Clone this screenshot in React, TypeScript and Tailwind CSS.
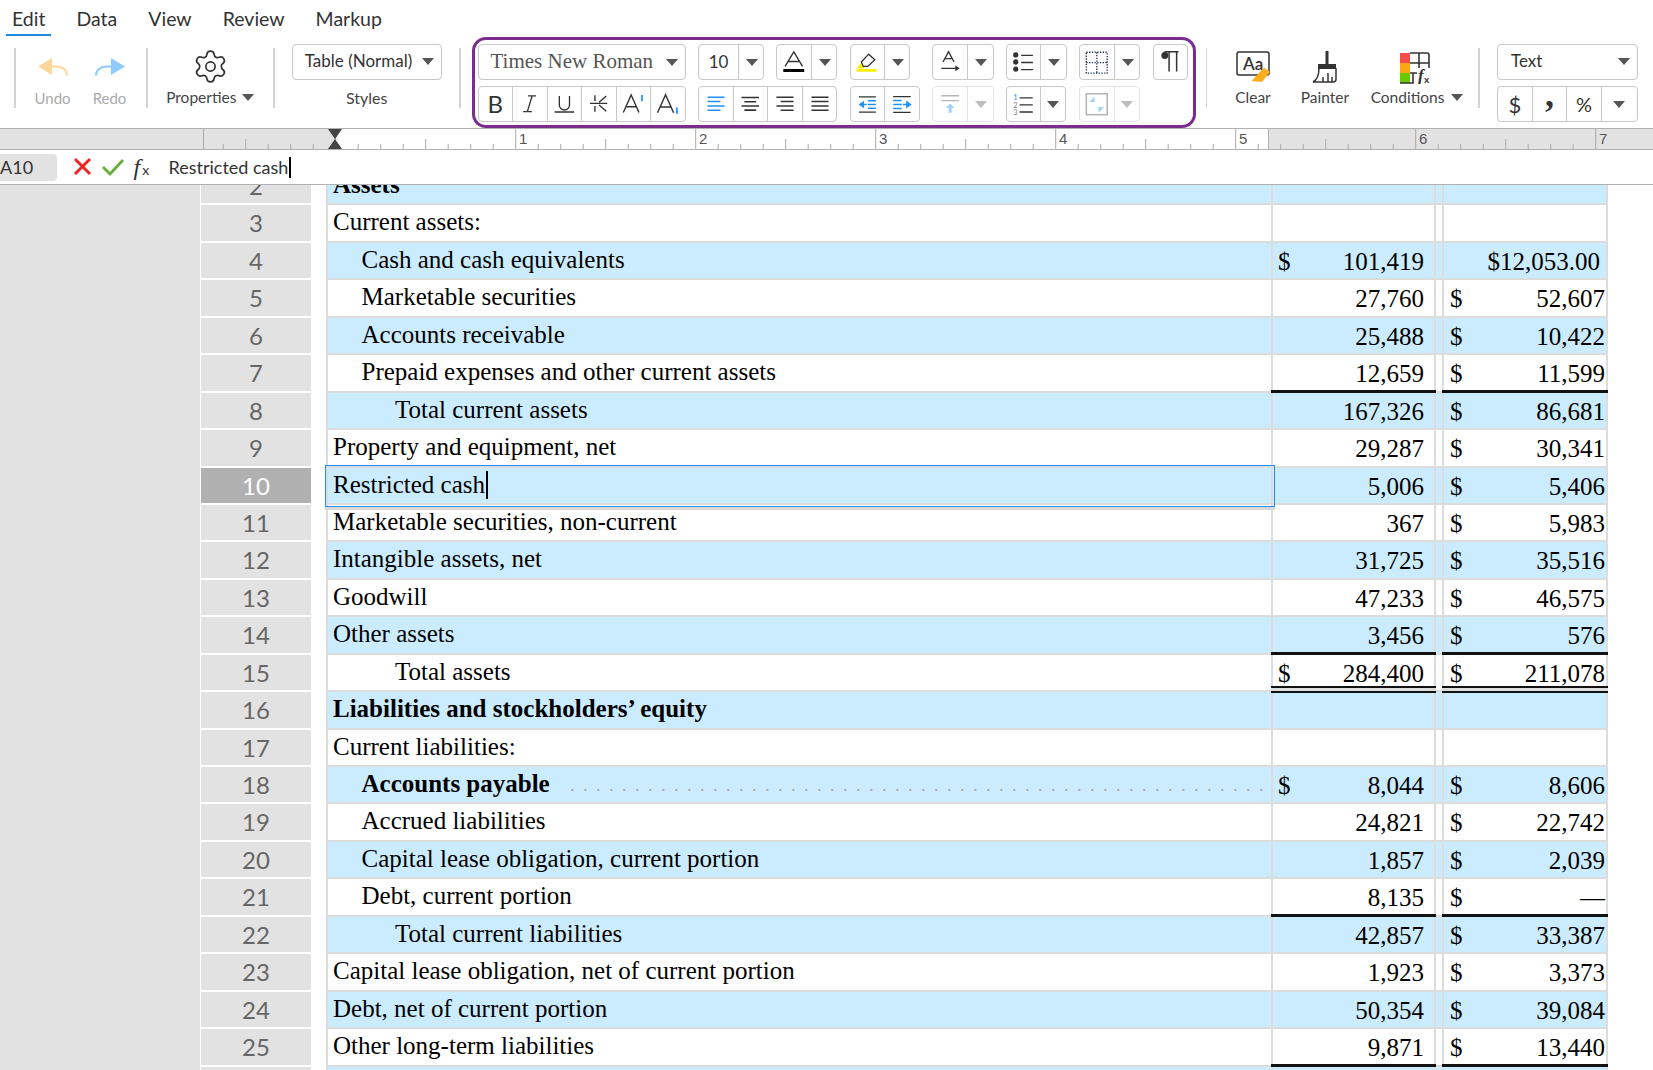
import { Settings } from 'lucide-react'
import type { ReactNode } from 'react'

type Row = {
  n: number
  label?: string
  lvl?: number
  bold?: boolean
  bs?: boolean
  b?: string
  c?: string
  cs?: boolean
  line?: 'single' | 'double'
}

const ROWS: Row[] = [
  { n: 2, label: 'Assets', bold: true },
  { n: 3, label: 'Current assets:' },
  { n: 4, label: 'Cash and cash equivalents', lvl: 1, bs: true, b: '101,419', c: '$12,053.00' },
  { n: 5, label: 'Marketable securities', lvl: 1, b: '27,760', c: '52,607', cs: true },
  { n: 6, label: 'Accounts receivable', lvl: 1, b: '25,488', c: '10,422', cs: true },
  { n: 7, label: 'Prepaid expenses and other current assets', lvl: 1, b: '12,659', c: '11,599', cs: true, line: 'single' },
  { n: 8, label: 'Total current assets', lvl: 2, b: '167,326', c: '86,681', cs: true },
  { n: 9, label: 'Property and equipment, net', b: '29,287', c: '30,341', cs: true },
  { n: 10, label: 'Restricted cash', b: '5,006', c: '5,406', cs: true },
  { n: 11, label: 'Marketable securities, non-current', b: '367', c: '5,983', cs: true },
  { n: 12, label: 'Intangible assets, net', b: '31,725', c: '35,516', cs: true },
  { n: 13, label: 'Goodwill', b: '47,233', c: '46,575', cs: true },
  { n: 14, label: 'Other assets', b: '3,456', c: '576', cs: true, line: 'single' },
  { n: 15, label: 'Total assets', lvl: 2, bs: true, b: '284,400', c: '211,078', cs: true, line: 'double' },
  { n: 16, label: 'Liabilities and stockholders’ equity', bold: true },
  { n: 17, label: 'Current liabilities:' },
  { n: 18, label: 'Accounts payable', lvl: 1, bold: true, bs: true, b: '8,044', c: '8,606', cs: true },
  { n: 19, label: 'Accrued liabilities', lvl: 1, b: '24,821', c: '22,742', cs: true },
  { n: 20, label: 'Capital lease obligation, current portion', lvl: 1, b: '1,857', c: '2,039', cs: true },
  { n: 21, label: 'Debt, current portion', lvl: 1, b: '8,135', c: '—', cs: true, line: 'single' },
  { n: 22, label: 'Total current liabilities', lvl: 2, b: '42,857', c: '33,387', cs: true },
  { n: 23, label: 'Capital lease obligation, net of current portion', b: '1,923', c: '3,373', cs: true },
  { n: 24, label: 'Debt, net of current portion', b: '50,354', c: '39,084', cs: true },
  { n: 25, label: 'Other long-term liabilities', b: '9,871', c: '13,440', cs: true, line: 'single' },
  { n: 26 },
]

const BLUE = '#1e90ff'
const DARK = '#333'

function Caret({ off, className = '' }: { off?: boolean; className?: string }) {
  return (
    <svg width="12" height="7" viewBox="0 0 12 7" className={className}>
      <path d="M0 0h12L6 7z" fill={off ? '#bdbdbd' : '#555'} />
    </svg>
  )
}

function Sep({ ml = '' }: { ml?: string }) {
  return <div className={`mt-[12px] h-[60px] w-[1.5px] shrink-0 bg-[#d4d4d4] ${ml}`} />
}

function Group({ className = '', off, children }: { className?: string; off?: boolean; children: ReactNode }) {
  return (
    <div className={`flex h-[36px] shrink-0 overflow-hidden rounded-[4px] border ${off ? 'border-[#e4e4e4] divide-[#e4e4e4]' : 'border-[#c8c8c8] divide-[#c8c8c8]'} divide-x ${className}`}>
      {children}
    </div>
  )
}

function Cell({ w, children }: { w: string; children?: ReactNode }) {
  return <div className={`flex h-full shrink-0 items-center justify-center ${w}`}>{children}</div>
}

function Ico({ children }: { children: ReactNode }) {
  return (
    <svg width="35" height="34" viewBox="0 0 35 34" fill="none" stroke={DARK} strokeWidth="1.4">
      {children}
    </svg>
  )
}

function AlignIcon({ lines, color }: { lines: [number, number][]; color: string }) {
  const ys = [10, 14.5, 19, 23.5]
  return (
    <Ico>
      {lines.map(([a, b], i) => (
        <path key={i} d={`M${a} ${ys[i]}H${b}`} stroke={color} strokeWidth="1.6" />
      ))}
    </Ico>
  )
}

function FirstRow() {
  return (
    <div className="flex">
      <div className="flex h-[36px] w-[208px] items-center justify-between rounded-[4px] border border-[#c8c8c8] pl-[12px] pr-[7px] font-['Liberation_Serif',serif] text-[21px] text-[#555]">
        Times New Roman
        <Caret />
      </div>
      <Group className="ml-[12.5px] w-[66px]">
        <Cell w="w-[40px]"><span className="text-[17px] text-[#333]">10</span></Cell>
        <Cell w="w-[25px]"><Caret /></Cell>
      </Group>
      <Group className="ml-[12px] w-[61px]">
        <Cell w="w-[35px]">
          <Ico>
            <path d="M8.3 21.5 17.3 6.5l9 15M11.5 16.5h11.5" />
            <path d="M6.5 25.8H28" stroke="#000" strokeWidth="3" />
          </Ico>
        </Cell>
        <Cell w="w-[25px]"><Caret /></Cell>
      </Group>
      <Group className="ml-[13px] w-[60px]">
        <Cell w="w-[34px]">
          <Ico>
            <path d="M6 24 11 17.5 14.5 24z" fill="#ffef00" stroke="none" />
            <path d="M11 17 18.7 8.7l6.6 6-7.6 7h-4.7z" />
            <path d="M6 25.8H27" stroke="#ffef00" strokeWidth="3" />
          </Ico>
        </Cell>
        <Cell w="w-[25px]"><Caret /></Cell>
      </Group>
      <Group className="ml-[22px] w-[62px]">
        <Cell w="w-[35px]">
          <Ico>
            <path d="M10.3 17 16 6.5 21.7 17M12 13.5h8" />
            <path d="M8.5 23.5H26" />
            <path d="M23 20.5 27.5 23.5 23 26.5z" fill={DARK} stroke="none" />
          </Ico>
        </Cell>
        <Cell w="w-[26px]"><Caret /></Cell>
      </Group>
      <Group className="ml-[12px] w-[60.5px]">
        <Cell w="w-[34px]">
          <Ico>
            <circle cx="9.3" cy="9.5" r="2.8" fill={DARK} stroke="none" />
            <circle cx="9.3" cy="17" r="2.8" fill={DARK} stroke="none" />
            <circle cx="9.3" cy="24.5" r="2.8" fill={DARK} stroke="none" />
            <path d="M15 10h12.5M15 17.5h12.5M15 25h12.5" />
          </Ico>
        </Cell>
        <Cell w="w-[25.5px]"><Caret /></Cell>
      </Group>
      <Group className="ml-[12.5px] w-[61px]">
        <Cell w="w-[35px]">
          <Ico>
            <path d="M6.5 7h21.5v21.5H6.5zM17.3 7v21.5M6.5 17.7h21.5" stroke="#2a3a5c" strokeWidth="1.4" strokeDasharray="1.4 1.4" />
          </Ico>
        </Cell>
        <Cell w="w-[25px]"><Caret /></Cell>
      </Group>
      <Group className="ml-[13px] w-[35px]">
        <Cell w="w-[33px]">
          <Ico>
            <circle cx="11.5" cy="10" r="3.7" fill={DARK} stroke="none" />
            <path d="M11 6.2h15M16 6.2v21M24 6.2v21" strokeWidth="1.6" />
          </Ico>
        </Cell>
      </Group>
    </div>
  )
}

function SecondRow() {
  return (
    <div className="mt-[6px] flex">
      <Group className="w-[208px]">
        <Cell w="w-[34.5px]"><span className="text-[24px] leading-none text-[#333]">B</span></Cell>
        <Cell w="w-[34.5px]">
          <Ico>
            <path d="M15.7 8.5H24M10.7 25h9M20 8.5 15 25" />
          </Ico>
        </Cell>
        <Cell w="w-[34px]">
          <Ico>
            <path d="M12 8.5v9.5a5.4 5.4 0 0 0 10.8 0V8.5M7 25.5h20.7" />
          </Ico>
        </Cell>
        <Cell w="w-[35px]">
          <Ico>
            <path d="M8.3 16.3H26M13.3 8v6M13.3 19v6M25 8.7l-7.4 6.5M17.6 18l7.4 6.5" />
          </Ico>
        </Cell>
        <Cell w="w-[34px]">
          <Ico>
            <path d="M6.7 26 15 7.5 23.3 26M9.5 20h11" strokeWidth="1.5" />
            <path d="M26.5 7.5v6.5" stroke={BLUE} strokeWidth="1.8" />
          </Ico>
        </Cell>
        <Cell w="w-[34px]">
          <Ico>
            <path d="M6.7 26 15 7.5 23.3 26M9.5 20h11" strokeWidth="1.5" />
            <path d="M26.7 20.5v6.5" stroke={BLUE} strokeWidth="1.8" />
          </Ico>
        </Cell>
      </Group>
      <Group className="ml-[12.5px] w-[139px]">
        <Cell w="w-[35px]"><AlignIcon color={BLUE} lines={[[8.7, 26.3], [8.7, 22], [8.7, 26.3], [8.7, 22]]} /></Cell>
        <Cell w="w-[34px]"><AlignIcon color={DARK} lines={[[8, 26.5], [11, 23.5], [8, 26.5], [11, 23.5]]} /></Cell>
        <Cell w="w-[35px]"><AlignIcon color={DARK} lines={[[8.7, 26.3], [13, 26.3], [8.7, 26.3], [13, 26.3]]} /></Cell>
        <Cell w="w-[34px]"><AlignIcon color={DARK} lines={[[8.7, 26.3], [8.7, 26.3], [8.7, 26.3], [8.7, 26.3]]} /></Cell>
      </Group>
      <Group className="ml-[12.5px] w-[70px]">
        <Cell w="w-[34.5px]">
          <Ico>
            <path d="M8.3 9.5H26M8.3 25.5H26" />
            <path d="M17.7 13.5H26M17.7 17.5H26M17.7 21.5H26M12 17.5h4.5" stroke={BLUE} strokeWidth="1.6" />
            <path d="M8 17.5 13.5 13.5v8z" fill={BLUE} stroke="none" />
          </Ico>
        </Cell>
        <Cell w="w-[34.5px]">
          <Ico>
            <path d="M8.3 9.5H26M8.3 25.5H26" />
            <path d="M8.3 13.5H17M8.3 17.5H17M8.3 21.5H17M18 17.5h4.5" stroke={BLUE} strokeWidth="1.6" />
            <path d="M27 17.5 21.5 13.5v8z" fill={BLUE} stroke="none" />
          </Ico>
        </Cell>
      </Group>
      <Group off className="ml-[12px] w-[62px]">
        <Cell w="w-[35px]">
          <Ico>
            <path d="M8.7 8.5h18M8.7 13.5h18" stroke="#b5b5b5" />
            <path d="M17.7 20v6" stroke="#9dd0fb" strokeWidth="3" />
            <path d="M13.5 21 17.7 16.5 22 21z" fill="#9dd0fb" stroke="none" />
          </Ico>
        </Cell>
        <Cell w="w-[26px]"><Caret off /></Cell>
      </Group>
      <Group className="ml-[12px] w-[60.5px]">
        <Cell w="w-[34px]">
          <Ico>
            <text x="6.5" y="13" fontSize="8" fill={BLUE} stroke="none" fontFamily="Lato, sans-serif">1</text>
            <text x="6.5" y="21" fontSize="8" fill="#777" stroke="none" fontFamily="Lato, sans-serif">2</text>
            <text x="6.5" y="29" fontSize="8" fill="#777" stroke="none" fontFamily="Lato, sans-serif">3</text>
            <path d="M13.3 10.5h14M13.3 18h14M13.3 25.5h14" />
          </Ico>
        </Cell>
        <Cell w="w-[25.5px]"><Caret /></Cell>
      </Group>
      <Group off className="ml-[12.5px] w-[61px]">
        <Cell w="w-[35px]">
          <Ico>
            <rect x="6.5" y="6.5" width="21.5" height="21.5" stroke="#b5b5b5" strokeWidth="1.6" />
            <path d="M9.7 15H15V9.5zM19 20H24.7L19 26z" fill="#9dd0fb" stroke="none" />
          </Ico>
        </Cell>
        <Cell w="w-[25px]"><Caret off /></Cell>
      </Group>
    </div>
  )
}

function Ribbon() {
  return (
    <div className="flex h-[92px] pl-[14px] text-[#444]">
      <Sep />
      <div className="flex w-[130.5px] pl-[9px] text-[15px] text-[#aaa]">
        <div className="flex w-[56px] flex-col items-center pt-[21px]">
          <svg width="32" height="20" viewBox="0 0 32 20">
            <path d="M1 9.5 15 1v17z" fill="#ffd699" />
            <path d="M14 9.5h5c6 0 11 3 11 9" stroke="#ffd699" strokeWidth="2" fill="none" />
          </svg>
          <span className="mt-[10px]">Undo</span>
        </div>
        <div className="flex w-[58px] flex-col items-center pt-[21px]">
          <svg width="32" height="20" viewBox="0 0 32 20">
            <path d="M31 9.5 17 1v17z" fill="#8fcbff" />
            <path d="M18 9.5h-5C7 9.5 2 12.5 2 18.5" stroke="#8fcbff" strokeWidth="2" fill="none" />
          </svg>
          <span className="mt-[10px]">Redo</span>
        </div>
      </div>
      <Sep />
      <div className="flex w-[125.5px] flex-col items-center pt-[12px] text-[15.5px]">
        <Settings size={37} strokeWidth={1.1} className="text-[#333]" />
        <div className="mt-[1px] flex items-center gap-[6px]">
          Properties
          <Caret />
        </div>
      </div>
      <Sep />
      <div className="flex w-[184.5px] flex-col items-center pt-[8px]">
        <div className="flex h-[36px] w-[150px] items-center justify-between rounded-[4px] border border-[#c8c8c8] pb-[2px] pl-[12px] pr-[7px] text-[17px] text-[#333]">
          Table (Normal)
          <Caret />
        </div>
        <span className="mt-[6px] text-[16px]">Styles</span>
      </div>
      <Sep />
      <div className="ml-[11px] mt-[1px] h-[91px] w-[724px] shrink-0 rounded-[14px] border-[3px] border-[#7b2d8e] pl-[3px] pt-[4px]">
        <FirstRow />
        <SecondRow />
      </div>
      <Sep ml="ml-[10px]" />
      <div className="flex w-[92px] flex-col items-center pt-[15px] text-[15.5px]">
        <svg width="36" height="32" viewBox="0 0 36 32">
          <rect x="2" y="1" width="32" height="23" rx="2" fill="none" stroke="#333" strokeWidth="1.5" />
          <text x="8" y="19" fontSize="17" fontWeight="600" fontFamily="Lato, sans-serif" fill="#333">Aa</text>
          <path d="M16.5 30 29 16.5l6 4.5L27 31z" fill="#fcae1e" />
        </svg>
        <span className="mt-[3px]">Clear</span>
      </div>
      <div className="flex w-[52px] flex-col items-center pt-[14px] text-[15.5px]">
        <svg width="28" height="34" viewBox="0 0 28 34" className="shrink-0">
          <path d="M16 1v14" stroke="#333" strokeWidth="3" />
          <path d="M7 14h18v5H7z" fill="#333" />
          <path d="M8 18c0 7-2 12-6 14h20c2 0 3-1 3-3V18M12 32v-5M17 32v-9M21 32v-5" fill="none" stroke="#333" strokeWidth="1.5" />
        </svg>
        <span className="mt-[2px] whitespace-nowrap">Painter</span>
      </div>
      <div className="flex w-[127px] flex-col items-center pl-[5px] pt-[16px] text-[15.5px]">
        <svg width="32" height="32" viewBox="0 0 32 32" className="shrink-0 -translate-x-[2px]">
          <path d="M1 1h10v10H1z" fill="#f44b4b" />
          <path d="M1 11h10v10H1z" fill="#faa619" />
          <path d="M1 21h10v10H1z" fill="#6cc800" />
          <path d="M11 1h17a2 2 0 0 1 2 2v13M11 11h19M20 1v15M11 21h7M14 21v10H1" fill="none" stroke="#333" strokeWidth="1.6" />
          <text x="19" y="29" fontSize="17" fontStyle="italic" fontWeight="bold" fontFamily="Liberation Serif, serif" fill="#333">f</text>
          <text x="25" y="31" fontSize="10" fontWeight="bold" fontFamily="Lato, sans-serif" fill="#333">x</text>
        </svg>
        <div className="mt-[2px] flex items-center gap-[7px] whitespace-nowrap">
          Conditions
          <Caret />
        </div>
      </div>
      <Sep />
      <div className="ml-[17.5px] flex flex-col gap-[6px] pt-[8px]">
        <div className="flex h-[36px] w-[140.5px] items-center justify-between rounded-[4px] border border-[#c8c8c8] pb-[2px] pl-[13px] pr-[7px] text-[17px] text-[#333]">
          Text
          <Caret />
        </div>
        <Group className="w-[140.5px] text-[#333]">
          <Cell w="w-[35px]"><span className="text-[22px]">$</span></Cell>
          <Cell w="w-[34px]"><span className="-mt-[20px] font-['Liberation_Serif',serif] text-[36px] font-bold leading-none">,</span></Cell>
          <Cell w="w-[35px]"><span className="text-[20px]">%</span></Cell>
          <Cell w="w-[34px]"><Caret /></Cell>
        </Group>
      </div>
    </div>
  )
}

function Ruler() {
  const ticks: { x: number; h: number }[] = []
  for (let i = 0; i < 65; i++) {
    const x = 155.7 + i * 22.5
    if (x < 204) continue
    const kind = i % 8
    ticks.push({ x, h: kind === 0 ? 21 : kind === 4 ? 10 : 5 })
  }
  const labels = [1, 2, 3, 4, 5, 6, 7]
  return (
    <div className="relative flex h-[22px] shrink-0 border-y border-[#b0b0b0]">
      <div className="w-[335px] bg-[#e2e2e2]" />
      <div className="w-[933px] bg-white" />
      <div className="flex-1 border-l border-[#b0b0b0] bg-[#e2e2e2]" />
      <svg width="1653" height="20" viewBox="0 0 1653 20" className="absolute left-0 top-0">
        <path d="M203.5 0v20" stroke="#aaa" strokeWidth="1" />
        {ticks.map((t) => (
          <path key={t.x} d={`M${t.x} 20V${20 - t.h}`} stroke="#aaa" strokeWidth="1" />
        ))}
        <path d="M328 0h14l-7 10zM328 20h14l-7-10z" fill="#444" />
      </svg>
      {labels.map((l) => (
        <span
          key={l}
          className="absolute top-[1px] font-['Liberation_Sans',sans-serif] text-[15px] leading-[18px] text-[#555]"
          style={{ left: 519 + (l - 1) * 180 }}
        >
          {l}
        </span>
      ))}
    </div>
  )
}

function FormulaBar() {
  return (
    <div className="flex h-[35px] shrink-0 items-center border-b border-[#b0b0b0] text-[18px] text-[#333]">
      <div className="flex h-[27px] w-[57px] items-center rounded-r-[4px] bg-[#e2e2e2]">A10</div>
      <svg width="20" height="20" viewBox="0 0 20 20" className="ml-[15.5px]">
        <path d="M2 2 17 17M17 2 2 17" stroke="#f02424" strokeWidth="3" fill="none" />
      </svg>
      <svg width="24" height="20" viewBox="0 0 24 20" className="ml-[8px]">
        <path d="M2 10l7 7L22 3" stroke="#66ad3c" strokeWidth="2.8" fill="none" />
      </svg>
      <div className="ml-[9px] flex w-[26px] items-baseline font-['Liberation_Serif',serif] text-[#333]">
        <span className="text-[24px] italic">f</span>
        <span className="ml-[2px] font-[Lato,sans-serif] text-[14px]">x</span>
      </div>
      <span className="ml-[9px]">Restricted cash</span>
      <span className="ml-[1px] h-[21px] w-[1.5px] bg-black" />
    </div>
  )
}

function Rule({ line }: { line?: 'single' | 'double' }) {
  if (line === 'single') {
    return <div className="absolute -bottom-[2px] -left-[2px] -right-[2px] z-10 h-[2.5px] bg-[#111]" />
  }
  if (line === 'double') {
    return <div className="absolute -bottom-[3px] -left-[2px] -right-[2px] z-10 h-[7px] border-y-[2.5px] border-[#111] bg-[#ddd]" />
  }
  return null
}

function SheetRow({ row }: { row: Row }) {
  const on = row.n % 2 === 0
  const sel = row.n === 10
  const bg = on ? 'bg-[#cbecfe]' : 'bg-white'
  return (
    <div className="flex h-[37.45px] shrink-0 font-['Liberation_Serif',serif] text-[25px] leading-[35px] text-black">
      <div className="w-[200px] shrink-0 bg-[#e2e2e2]" />
      <div className={`w-[111px] shrink-0 border-b-2 border-l border-white text-center font-[Lato,sans-serif] text-[24px] ${sel ? 'bg-[#b0b0b0] text-white' : 'bg-[#e2e2e2] text-[#666]'}`}>
        {row.n}
      </div>
      <div className="w-[15px] shrink-0" />
      <div className={`relative w-[947px] shrink-0 whitespace-nowrap border-x-2 border-b-2 border-[#dcdcdc] leading-[34.6px] ${bg} ${row.lvl === 1 ? 'pl-[33.5px]' : row.lvl === 2 ? 'pl-[67px]' : 'pl-[5px]'} ${row.bold ? 'font-bold' : ''}`}>
        {row.label}
        {row.n === 18 && (
          <span className="absolute left-[242px] top-[1px] w-[695px] overflow-hidden text-[18px] font-normal text-[#aaa] [word-spacing:4px]">
            {Array(60).fill('.').join(' ')}
          </span>
        )}
        {sel && (
          <>
            <span className="absolute left-[158px] top-[3px] h-[28px] w-[2px] bg-black" />
            <div className="absolute -bottom-[4px] -left-[3px] -right-[4px] -top-[3px] z-20 border-[1.5px] border-[#1e90ff] shadow-[0_3px_0_#d8d8d8]" />
          </>
        )}
      </div>
      <div className={`relative flex w-[163px] shrink-0 justify-between border-b-2 border-r-2 border-[#dcdcdc] pl-[5px] pr-[10px] pt-[1px] ${bg}`}>
        <span>{row.bs ? '$' : ''}</span>
        <span>{row.b}</span>
        <Rule line={row.line} />
      </div>
      <div className={`w-[8px] shrink-0 border-b-2 border-r-2 border-[#dcdcdc] ${bg}`} />
      <div className={`relative flex w-[164px] shrink-0 justify-between border-b-2 border-r-2 border-[#dcdcdc] pl-[6px] pr-[1px] pt-[1px] ${bg}`}>
        <span>{row.cs ? '$' : ''}</span>
        <span className={row.n === 4 ? 'pr-[5px]' : ''}>{row.c}</span>
        <Rule line={row.line} />
      </div>
    </div>
  )
}

export default function App() {
  return (
    <div className="flex h-[1070px] w-[1653px] flex-col overflow-hidden bg-white font-[Lato,sans-serif]">
      {/* tabs */}
      <div className="flex h-[36px] shrink-0 gap-[19px] pl-[6px] text-[19.5px] text-[#333]">
        <div className="h-[36px] border-b-[2px] border-[#1e88e5] px-[6px] pt-[7px] leading-[24px]">Edit</div>
        <div className="px-[6px] pt-[7px] leading-[24px]">Data</div>
        <div className="px-[6px] pt-[7px] leading-[24px]">View</div>
        <div className="px-[6px] pt-[7px] leading-[24px]">Review</div>
        <div className="px-[6px] pt-[7px] leading-[24px]">Markup</div>
      </div>
      <Ribbon />
      <Ruler />
      <FormulaBar />
      <div className="flex-1 overflow-hidden">
        <div className="-mt-[17px]">
          {ROWS.map((r) => (
            <SheetRow key={r.n} row={r} />
          ))}
        </div>
      </div>
    </div>
  )
}
